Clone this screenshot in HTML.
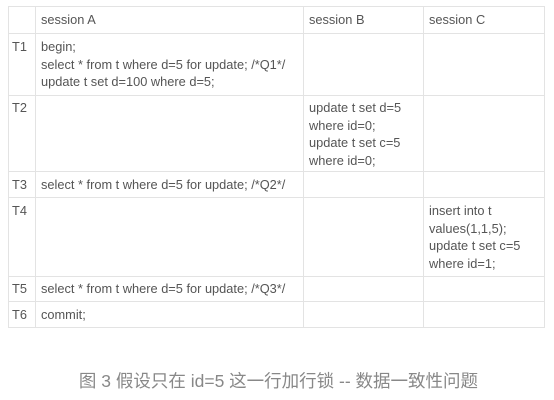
<!DOCTYPE html>
<html><head><meta charset="utf-8"><style>
body{margin:0;width:554px;height:400px;background:#fff;position:relative;overflow:hidden;font-family:"Liberation Sans","Noto Sans CJK SC",sans-serif;}
.h{position:absolute;height:1px;background:#e3e3e3;left:8px;width:537px}
.v{position:absolute;width:1px;background:#e3e3e3;top:6px;height:322px}
.t{position:absolute;font-size:12.8px;color:#555;line-height:17.5px;white-space:nowrap}
.cap{position:absolute;left:0;width:557px;text-align:center;top:368px;font-size:17.5px;color:#888;}
</style></head><body>
<div class="h" style="top:6px"></div>
<div class="h" style="top:33px"></div>
<div class="h" style="top:95px"></div>
<div class="h" style="top:171px"></div>
<div class="h" style="top:197px"></div>
<div class="h" style="top:276px"></div>
<div class="h" style="top:301px"></div>
<div class="h" style="top:327px"></div>
<div class="v" style="left:8px"></div>
<div class="v" style="left:35px"></div>
<div class="v" style="left:303px"></div>
<div class="v" style="left:423px"></div>
<div class="v" style="left:544px"></div>

<div class="t" style="left:41px;top:11px">session A</div>
<div class="t" style="left:309px;top:11px">session B</div>
<div class="t" style="left:429px;top:11px">session C</div>

<div class="t" style="left:12px;top:38px">T1</div>
<div class="t" style="left:41px;top:38px">begin;<br>select * from t where d=5 for update; /*Q1*/<br>update t set d=100 where d=5;</div>

<div class="t" style="left:12px;top:99px">T2</div>
<div class="t" style="left:309px;top:99px">update t set d=5<br>where id=0;<br>update t set c=5<br>where id=0;</div>

<div class="t" style="left:12px;top:176px">T3</div>
<div class="t" style="left:41px;top:176px">select * from t where d=5 for update; /*Q2*/</div>

<div class="t" style="left:12px;top:202px">T4</div>
<div class="t" style="left:429px;top:202px">insert into t<br>values(1,1,5);<br>update t set c=5<br>where id=1;</div>

<div class="t" style="left:12px;top:280px">T5</div>
<div class="t" style="left:41px;top:280px">select * from t where d=5 for update; /*Q3*/</div>

<div class="t" style="left:12px;top:306px">T6</div>
<div class="t" style="left:41px;top:306px">commit;</div>

<div class="cap">图 3 假设只在 id=5 这一行加行锁 -- 数据一致性问题</div>
</body></html>
